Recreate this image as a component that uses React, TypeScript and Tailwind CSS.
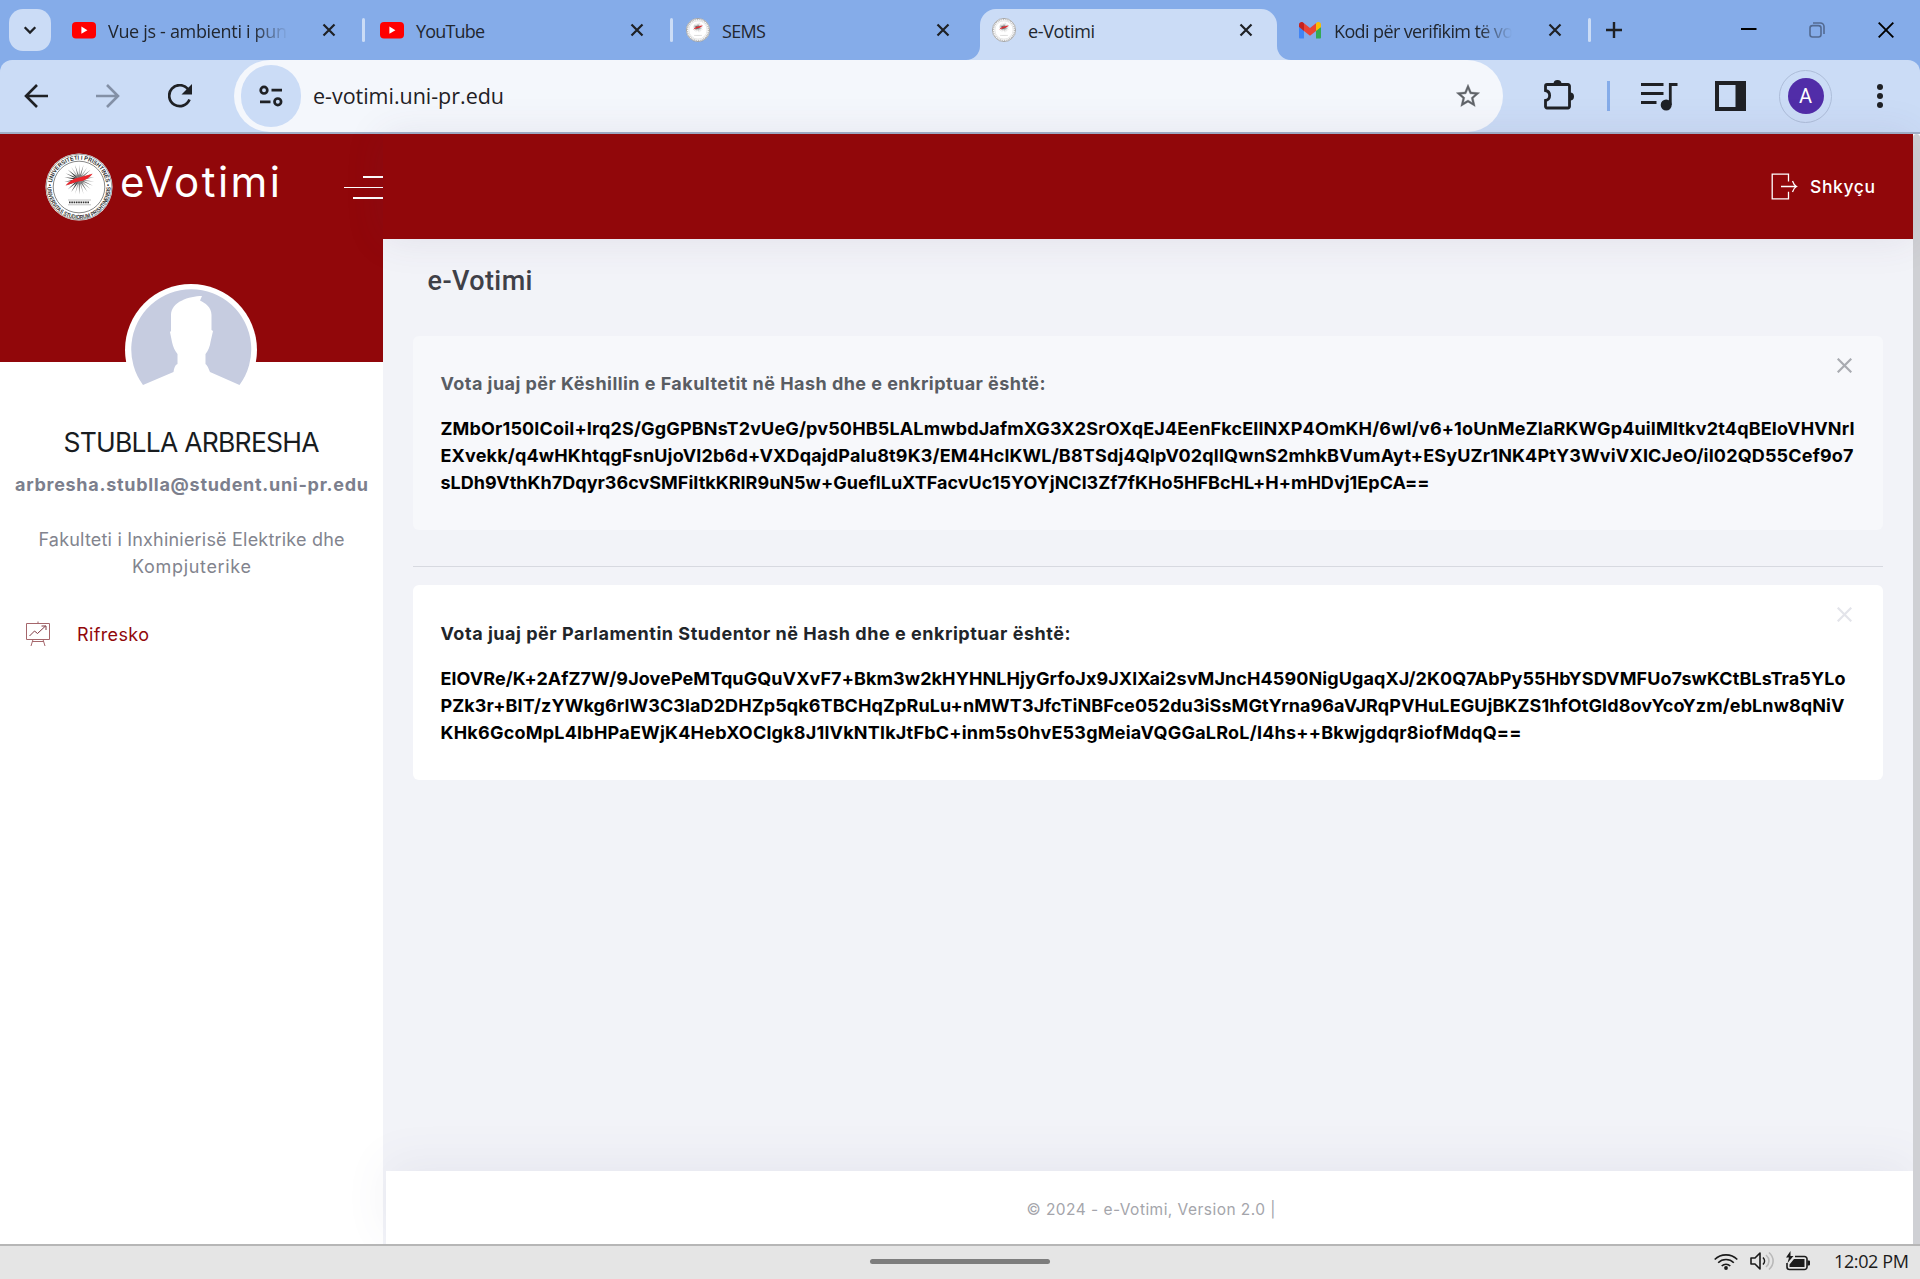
import { useLayoutEffect, useRef, useState } from "react";
import type { ReactNode } from "react";

/** One line of text whose tracking is adjusted so that it spans `width` pixels. */
function Fit({ text, width, className = "" }: { text: string; width: number; className?: string }) {
  const ref = useRef<HTMLSpanElement>(null);
  const [spacing, setSpacing] = useState(0);
  useLayoutEffect(() => {
    const el = ref.current;
    if (!el) return;
    const natural = el.getBoundingClientRect().width - spacing * text.length;
    setSpacing((width - natural) / (text.length - 1));
  }, [text, width]);
  return (
    <span
      ref={ref}
      className={`inline-block whitespace-nowrap ${className}`}
      style={{ letterSpacing: `${spacing}px`, marginRight: `${-spacing}px` }}
    >
      {text}
    </span>
  );
}

function YouTubeIcon() {
  return (
    <svg className="h-6 w-6 shrink-0" viewBox="0 0 24 24">
      <rect x="0" y="4" width="24" height="16.5" rx="4" fill="#ff0000" />
      <path d="M9.4 8.6v7.2l6-3.6z" fill="#fff" />
    </svg>
  );
}

const RAYS = Array.from({ length: 22 }, (_, i) => i * (360 / 22));

function Seal({ size, detail }: { size: number; detail: boolean }) {
  return (
    <svg width={size} height={size} viewBox="0 0 68 68" className="shrink-0">
      <circle cx="34" cy="34" r="33.5" fill="#fff" />
      <circle cx="34" cy="34" r="32.8" fill="none" stroke="#888" strokeWidth={detail ? 0.8 : 2} />
      <circle cx="34" cy="34" r="25.8" fill="none" stroke={detail ? "#555" : "#bbb"} strokeWidth={detail ? 0.7 : 1} />
      {detail ? (
        <>
          <defs>
            <path id="seal-top" d="M7.2 38.5A27.2 27.2 0 1 1 60.8 38.5" />
            <path id="seal-bottom" d="M2.600 31A31.600 31.600 0 1 0 65.400 31" />
          </defs>
          <text fontSize="6" fontWeight="700" fill="#333" fontFamily="Liberation Sans, sans-serif" textAnchor="middle">
            <textPath href="#seal-top" startOffset="50%" textLength="84" lengthAdjust="spacingAndGlyphs">
              • UNIVERSITETI I PRISHTINËS •
            </textPath>
          </text>
          <text fontSize="6" fontWeight="700" fill="#333" fontFamily="Liberation Sans, sans-serif" textAnchor="middle">
            <textPath href="#seal-bottom" startOffset="50%" textLength="100" lengthAdjust="spacingAndGlyphs">
              UNIVERSITAS STUDIORUM PRISHTINENSIS
            </textPath>
          </text>
        </>
      ) : (
        <circle cx="34" cy="34" r="29.5" fill="none" stroke="#bbb" strokeWidth="3.500" strokeDasharray="3 2.400" />
      )}
      {RAYS.map((a, i) => (
        <path
          key={a}
          d="M33.4 26.500L34.300 11.500L35.200 26.500Z"
          fill={i > 12 && i < 20 ? "#333" : i % 2 ? "#777" : "#aaa"}
          transform={`rotate(${a} 34.300 26.500)`}
        />
      ))}
      <circle cx="34.3" cy="26.5" r="5" fill="#777" opacity="0.7" />
      <path d="M20.500 32.400C25 27.500 29 25.200 35 24.200L47.600 20.800C43 26.500 39 28 33 28.600Z" fill="#e8252c" />
      {detail && <path d="M23 47h23M23 51.800h23" stroke="#999" strokeWidth="0.600" />}
      <path d="M24 49.400h20" stroke={detail ? "#333" : "#aaa"} strokeWidth="1.800" strokeDasharray="1.600 0.700" />
    </svg>
  );
}

function GmailIcon() {
  return (
    <svg className="h-6 w-6 shrink-0" viewBox="0 0 24 24">
      <path d="M1 9v10.2c0 .7.5 1.3 1.200 1.3H6V12z" fill="#4285f4" />
      <path d="M18 12v8.500h3.800c.7 0 1.200-.6 1.200-1.300V9z" fill="#34a853" />
      <path d="M6 5.200V13l6 4.800 6-4.800V5.200l-6 4.900z" fill="#ea4335" />
      <path d="M18 5.200V13l5-4V6.600c0-2.300-2.300-3.200-3.800-2.300z" fill="#fbbc04" />
      <path d="M1 6.600V9l5 4V5.200l-1.200-.9C3.300 3.400 1 4.300 1 6.600z" fill="#c5221f" />
    </svg>
  );
}

function Close() {
  return (
    <svg className="h-3.5 w-3.5 shrink-0" viewBox="0 0 14 14" stroke="#1f2125" strokeWidth="2.2">
      <path d="M1.500 1.500l11 11M12.500 1.500l-11 11" />
    </svg>
  );
}

function Tab({ icon, children, divider = true }: { icon: ReactNode; children: ReactNode; divider?: boolean }) {
  return (
    <div className="flex h-full w-[304px] shrink-0 items-center pl-[10px]">
      {icon}
      <div className="ml-3 mt-[2px] flex h-8 w-[180px] items-center text-[#22272f]">{children}</div>
      <div className="ml-auto mr-[26px] flex">
        <Close />
      </div>
      <div className={`h-6 w-[3px] rounded-sm ${divider ? "bg-[#cbdcf6]" : ""}`} />
      <div className="w-px" />
    </div>
  );
}

function TabStrip() {
  return (
    <div className="flex h-[60px] items-center bg-[#85ace9] font-['Open_Sans','Noto_Sans',sans-serif] text-[18px]">
      <div className="ml-[9px] mr-[10px] flex h-[42px] w-[42px] shrink-0 items-center justify-center rounded-[14px] bg-[#cbdcf6]">
        <svg className="h-4 w-4" viewBox="0 0 16 16" fill="none" stroke="#1f2125" strokeWidth="2.300">
          <path d="M2.700 5.300L8 10.600l5.300-5.300" />
        </svg>
      </div>
      <div className="ml-px">
        <Tab icon={<YouTubeIcon />}>
          <div className="[mask-image:linear-gradient(to_right,black_145px,transparent_180px)]">
            <Fit text="Vue js - ambienti i pun" width={179} />
          </div>
        </Tab>
      </div>
      <div className="ml-1">
        <Tab icon={<YouTubeIcon />}>
          <Fit text="YouTube" width={69} />
        </Tab>
      </div>
      <div className="ml-[2px]">
        <Tab icon={<Seal size={24} detail={false} />} divider={false}>
          <Fit text="SEMS" width={44} />
        </Tab>
      </div>
      <div className="relative mt-[9px] flex h-[51px] w-[297px] shrink-0 items-center rounded-t-2xl bg-[#cbdcf6] pl-3">
        <svg className="absolute -left-3.5 bottom-0 h-3.5 w-3.5" viewBox="0 0 14 14">
          <path d="M14 0v14H0A14 14 0 0 0 14 0" fill="#cbdcf6" />
        </svg>
        <svg className="absolute -right-3.5 bottom-0 h-3.5 w-3.5" viewBox="0 0 14 14">
          <path d="M0 0v14H14A14 14 0 0 1 0 0" fill="#cbdcf6" />
        </svg>
        <div className="mb-[9px] flex w-full items-center">
          <Seal size={24} detail={false} />
          <div className="ml-3 mt-[2px] h-8 text-[#22272f]">
            <Fit text="e-Votimi" width={67} className="leading-8" />
          </div>
          <div className="ml-auto mr-[24px] flex">
            <Close />
          </div>
        </div>
      </div>
      <div className="ml-[11px]">
        <Tab icon={<GmailIcon />}>
          <div className="[mask-image:linear-gradient(to_right,black_145px,transparent_178px)]">
            <Fit text="Kodi për verifikim të vo" width={179} />
          </div>
        </Tab>
      </div>
      <svg className="ml-[14px] h-4 w-4 shrink-0" viewBox="0 0 16 16" stroke="#1f2125" strokeWidth="2.400">
        <path d="M8 0v16M0 8h16" />
      </svg>
      <svg className="ml-auto h-4 w-4 shrink-0" viewBox="0 0 16 16" stroke="#000" strokeWidth="2">
        <path d="M0 7h15.500" />
      </svg>
      <svg className="ml-[52px] h-4 w-4 shrink-0" viewBox="0 0 16 16" fill="none" stroke="#536a91" strokeWidth="1.600">
        <rect x="1" y="3.600" width="11" height="11.400" rx="2.500" />
        <path d="M4 1h7.500a3.500 3.500 0 0 1 3.500 3.500v7.500" />
      </svg>
      <svg className="ml-[53px] mr-[26px] h-4 w-4 shrink-0" viewBox="0 0 16 16" stroke="#000" strokeWidth="1.900">
        <path d="M.700.700l14.600 14.600M15.300.700L.700 15.300" />
      </svg>
    </div>
  );
}

function Toolbar() {
  return (
    <div className="h-[74px] bg-[#85ace9]">
      <div className="flex h-[74px] items-center rounded-t-[12px] border-b-2 border-[#a1afc7] bg-[#cbdcf6]">
        <svg className="ml-6 h-6 w-6 shrink-0" viewBox="0 0 24 24" fill="none" stroke="#1f2125" strokeWidth="2.600">
          <path d="M24 12H2M13 1L2 12l11 11" />
        </svg>
        <svg className="ml-12 h-6 w-6 shrink-0" viewBox="0 0 24 24" fill="none" stroke="#8390a6" strokeWidth="2.600">
          <path d="M0 12h22M11 1l11 11-11 11" />
        </svg>
        <svg className="ml-12 h-6 w-6 shrink-0" viewBox="0 0 24 24" fill="none" stroke="#1f2125" strokeWidth="2.700">
          <path d="M21.500 15.500A10.500 10.500 0 1 1 20 5.200" />
          <path d="M24 0v10.500H13.500z" fill="#1f2125" stroke="none" />
        </svg>
        <div className="ml-[42px] flex h-[72px] w-[1269px] shrink-0 items-center rounded-full bg-[#f4f7fc]">
          <div className="ml-[7px] flex h-[62px] w-[60px] shrink-0 items-center justify-center rounded-full bg-[#cbdcf6]">
            <svg className="h-[22px] w-6" viewBox="0 0 24 22" fill="none" stroke="#1f2125" strokeWidth="2.700">
              <circle cx="5" cy="5.200" r="3.300" />
              <path d="M12.500 5.200H23M1 16.800h10.500" />
              <circle cx="18.800" cy="16.800" r="3.300" />
            </svg>
          </div>
          <div className="ml-3 font-['Open_Sans','Noto_Sans',sans-serif] text-[21.500px] text-[#1f2125]">
            <Fit text="e-votimi.uni-pr.edu" width={191} />
          </div>
          <svg className="ml-auto mr-[21px] h-[28px] w-[28px]" viewBox="0 0 24 24" fill="#5f6368" stroke="#5f6368" strokeWidth="0.300">
            <path d="M22 9.240l-7.190-.620L12 2 9.190 8.630 2 9.240l5.460 4.730L5.820 21 12 17.270 18.180 21l-1.630-7.030L22 9.240zM12 15.400l-3.760 2.270 1-4.280-3.320-2.880 4.380-.380L12 6.100l1.710 4.040 4.380.380-3.320 2.880 1 4.280L12 15.400z" />
          </svg>
        </div>
        <svg className="mb-[2px] ml-[40px] h-[30px] w-[32px] shrink-0" viewBox="0 0 32 30">
          <path
            d="M4.500 4.500h20.500a1.500 1.500 0 0 1 1.500 1.500v20.500a1.500 1.500 0 0 1-1.500 1.500H4a1.500 1.500 0 0 1-1.500-1.500V20.500c5.500-1 5.500-9 0-10V6a1.500 1.500 0 0 1 1.500-1.500z"
            fill="none"
            stroke="#1f2125"
            strokeWidth="2.800"
          />
          <path d="M10.500 4a4 4 0 0 1 8 0zM27 12.500a4 4 0 0 1 0 8z" fill="#1f2125" />
        </svg>
        <div className="ml-[32px] h-[30px] w-[2.500px] shrink-0 bg-[#85ace9]" />
        <svg className="ml-[31px] h-[30px] w-[37px] shrink-0" viewBox="0 0 37 30" fill="none" stroke="#1f2125" strokeWidth="2.800">
          <path d="M0 3.500h22.500M0 12.500h22.500M0 21.500h15.500M29.300 24V3.500H36.500" />
          <circle cx="25.200" cy="24" r="5.500" fill="#1f2125" stroke="none" />
        </svg>
        <svg className="ml-[37.500px] h-[30px] w-[31px] shrink-0" viewBox="0 0 31 30">
          <path d="M0 0h31v30H0zM4 4v22h16.500V4z" fill="#1f2125" fillRule="evenodd" />
        </svg>
        <div className="ml-[33px] flex h-[53px] w-[53px] shrink-0 items-center justify-center rounded-full border border-[#adbdd9]">
          <div className="flex h-9 w-9 items-center justify-center rounded-full bg-[#512da8] font-['Roboto',sans-serif] text-[20px] text-white">
            A
          </div>
        </div>
        <svg className="ml-[45px] h-6 w-[6px] shrink-0" viewBox="0 0 6 24" fill="#1f2125">
          <circle cx="3" cy="3" r="3" />
          <circle cx="3" cy="12" r="3" />
          <circle cx="3" cy="21" r="3" />
        </svg>
      </div>
    </div>
  );
}

function Sidebar() {
  return (
    <aside className="h-full w-[383px] shrink-0 bg-white font-['Inter',sans-serif]">
      <div className="h-[228px] bg-[#91070a]">
        <div className="flex h-[105px] items-center">
          <div className="ml-[45px] h-[68px]">
            <Seal size={68} detail />
          </div>
          <div className="-mt-[9px] ml-[7px] text-[42px] leading-[60px] text-white">
            <Fit text="eVotimi" width={160} />
          </div>
          <div className="ml-auto mt-[2px] flex flex-col items-end">
            <div className="h-[2px] w-5 bg-white" />
            <div className="mt-[9px] h-px w-[39px] bg-white" />
            <div className="mt-[9px] h-[2px] w-[30px] bg-white" />
          </div>
        </div>
        <svg className="ml-[125px] mt-[45px] h-[132px] w-[132px]" viewBox="0 0 132 132">
          <circle cx="66" cy="66" r="66" fill="#fff" />
          <path d="M18 101A60 60 0 1 1 114.500 101L85 88C83 83 82 81 80.500 80V70C83 67 85 62 85.500 58L88 47L86.500 46V31C86.500 23 80 19 75 16.500L77 12C64 12 46 18 46 31V47L45 48L47 58C48 63 50 67 52.500 70V80C50 81 49 84 48.500 88Z" fill="#c6cce0" />
        </svg>
      </div>
      <div className="flex flex-col items-center pt-[60px]">
        <div className="text-[26.500px] leading-10 text-[#181c1f]">
          <Fit text="STUBLLA ARBRESHA" width={256} />
        </div>
        <div className="mt-[7px] text-[18px] font-bold leading-[32px] text-[#7c7f8d]">
          <Fit text="arbresha.stublla@student.uni-pr.edu" width={353} />
        </div>
        <div className="mt-[25px] text-[18px] leading-[27px] text-[#82848e]">
          <Fit text="Fakulteti i Inxhinierisë Elektrike dhe" width={306} />
        </div>
        <div className="text-[18px] leading-[27px] text-[#82848e]">
          <Fit text="Kompjuterike" width={119} />
        </div>
      </div>
      <div className="mt-[40px] flex h-[27px] items-center pl-[25px] text-[18px] text-[#91070a]">
        <svg className="h-[26px] w-[26px]" viewBox="0 0 26 26" fill="none" stroke="#a5666b" strokeWidth="1">
          <path d="M1.500 2.500h23v16h-23zM13 .5v2M8 18.500l-2 6.500M18 18.500l2 6.500M7 20.500h12" />
          <path d="M4.500 15l5-5 3 2.500 8-7.500M16.500 5h4.500v4" stroke="#7e3a42" />
        </svg>
        <div className="ml-[26px] mt-px">
          <Fit text="Rifresko" width={72} />
        </div>
      </div>
    </aside>
  );
}

function VoteCard({
  title,
  titleWidth,
  lines,
  className,
  titleClass,
  crossClass,
}: {
  title: string;
  titleWidth: number;
  lines: [string, number][];
  className: string;
  titleClass: string;
  crossClass: string;
}) {
  return (
    <section className={`relative rounded-md pl-[27.500px] text-[18px] leading-[27px] ${className}`}>
      <svg className={`absolute right-[31px] top-[22px] h-[15px] w-[15px] ${crossClass}`} viewBox="0 0 15 15" stroke="currentColor" strokeWidth="2.200">
        <path d="M.700.700l13.600 13.600M14.300.700L.700 14.300" />
      </svg>
      <h2 className={`mb-[18px] h-[27px] font-bold ${titleClass}`}>
        <Fit text={title} width={titleWidth} />
      </h2>
      {lines.map(([text, width]) => (
        <div key={text} className="h-[27px] font-bold text-black">
          <Fit text={text} width={width} />
        </div>
      ))}
    </section>
  );
}

function Main() {
  return (
    <div className="flex h-full min-w-0 flex-1 flex-col bg-[#f2f3f8] font-['Inter',sans-serif]">
      <header className="z-10 flex h-[105px] shrink-0 items-center justify-end bg-[#91070a] pr-[38px] text-white shadow-[0_0_40px_rgba(82,63,105,0.1)]">
        <svg className="h-[27px] w-[27px]" viewBox="0 0 27 27" fill="none" stroke="#fff" strokeWidth="1.300">
          <path d="M17.500 8.500V1.200H1.200v24.600h16.300v-7M10 13.500h15.500M21.500 8c1 3 2 4.500 4 5.500-2 1-3 2.500-4 5.500" />
        </svg>
        <div className="ml-3 mt-px text-[17.500px] font-medium">
          <Fit text="Shkyçu" width={65} />
        </div>
      </header>
      <main className="flex-1 pl-[30px] pr-[30px]">
        <h1 className="mt-[22px] h-10 pl-[14.500px] font-['Roboto',sans-serif] text-[27px] font-medium leading-10 text-[#3f4047]">
          <Fit text="e-Votimi" width={105} />
        </h1>
        <VoteCard
          className="mt-[35px] h-[194px] bg-[#f7f8fb] pt-[34px]"
          titleClass="text-[#595d63]"
          crossClass="text-[#a9abb1]"
          title="Vota juaj për Këshillin e Fakultetit në Hash dhe e enkriptuar është:"
          titleWidth={605}
          lines={[
            ["ZMbOr150ICoiI+Irq2S/GgGPBNsT2vUeG/pv50HB5LALmwbdJafmXG3X2SrOXqEJ4EenFkcEIlNXP4OmKH/6wI/v6+1oUnMeZIaRKWGp4uiIMltkv2t4qBEIoVHVNrI", 1414],
            ["EXvekk/q4wHKhtqgFsnUjoVI2b6d+VXDqajdPaIu8t9K3/EM4HclKWL/B8TSdj4QlpV02qlIQwnS2mhkBVumAyt+ESyUZr1NK4PtY3WviVXICJeO/iI02QD55Cef9o7", 1413],
            ["sLDh9VthKh7Dqyr36cvSMFiItkKRIR9uN5w+GueflLuXTFacvUc15YOYjNCl3Zf7fKHo5HFBcHL+H+mHDvj1EpCA==", 989],
          ]}
        />
        <hr className="mb-[18px] mt-[36px] border-0 border-t border-[#d7d9e0]" />
        <VoteCard
          className="h-[195px] bg-white pt-[35px]"
          titleClass="text-[#212529]"
          crossClass="text-[#e3e4ea]"
          title="Vota juaj për Parlamentin Studentor në Hash dhe e enkriptuar është:"
          titleWidth={630}
          lines={[
            ["ElOVRe/K+2AfZ7W/9JovePeMTquGQuVXvF7+Bkm3w2kHYHNLHjyGrfoJx9JXlXai2svMJncH4590NigUgaqXJ/2K0Q7AbPy55HbYSDVMFUo7swKCtBLsTra5YLo", 1405],
            ["PZk3r+BIT/zYWkg6rlW3C3laD2DHZp5qk6TBCHqZpRuLu+nMWT3JfcTiNBFce052du3iSsMGtYrna96aVJRqPVHuLEGUjBKZS1hfOtGId8ovYcoYzm/ebLnw8qNiV", 1404],
            ["KHk6GcoMpL4IbHPaEWjK4HebXOClgk8J1lVkNTlkJtFbC+inm5s0hvE53gMeiaVQGGaLRoL/I4hs++Bkwjgdqr8iofMdqQ==", 1081],
          ]}
        />
      </main>
      <footer className="ml-[3px] flex h-[73px] shrink-0 items-center justify-center bg-white pl-[3px] pt-[5px] text-[15.500px] text-[#a4a5ab] shadow-[0_-10px_45px_rgba(82,90,130,0.07)]">
        <Fit text="© 2024 - e-Votimi, Version 2.0 |" width={249} />
      </footer>
    </div>
  );
}

function Taskbar() {
  return (
    <div className="grid h-[35px] grid-cols-[1fr_180px_1fr] items-center border-t-2 border-[#b6b6b6] bg-[#e5e5e5] pb-[3px]">
      <div />
      <div className="h-[5px] w-[180px] rounded-full bg-[#7d7d7d]" />
      <div className="flex items-center justify-end pr-[11px]">
        <svg className="h-[18px] w-6" viewBox="0 0 24 18" fill="none" stroke="#1b1b1b" strokeWidth="1.600">
          <path d="M.7 7.500a16 16 0 0 1 22.600 0M4.200 10.800a11 11 0 0 1 15.600 0M7.700 14a6.200 6.200 0 0 1 8.600 0" />
          <circle cx="12" cy="16" r="1.900" fill="#1b1b1b" stroke="none" />
        </svg>
        <svg className="ml-3 h-5 w-[25px]" viewBox="0 0 25 20" fill="none" stroke="#1b1b1b" strokeWidth="1.600">
          <path d="M1 7h4l5-5v16l-5-5H1z" strokeLinejoin="round" />
          <path d="M13 6.500c2 2 2 5 0 7" />
          <path d="M16 4c4 3.500 4 8.500 0 12M19 1.500c5.500 5 5.500 12 0 17" stroke="#b9b9b9" />
        </svg>
        <svg className="ml-[11px] h-5 w-6" viewBox="0 0 24 20">
          <path d="M9 5.500h9.500a2.500 2.500 0 0 1 2.500 2.500v8a2.500 2.500 0 0 1-2.500 2.500H3.500A2.500 2.500 0 0 1 1 16v-4" fill="none" stroke="#1b1b1b" strokeWidth="1.600" />
          <path d="M8 8h10.500v8H3.500v-2.500zM21.500 9.500h1.500a1 1 0 0 1 1 1v3a1 1 0 0 1-1 1h-1.500zM4.500 0L0 6.500h3L1.500 12 7.500 5H4.500z" fill="#1b1b1b" />
        </svg>
        <div className="ml-[24px] font-['Open_Sans','Noto_Sans',sans-serif] text-[18px] leading-6 text-[#1b1b1b]">
          <Fit text="12:02 PM" width={75} />
        </div>
      </div>
    </div>
  );
}

export default function App() {
  return (
    <div className="flex h-[1279px] w-[1920px] flex-col overflow-hidden">
      <TabStrip />
      <Toolbar />
      <div className="flex h-[1110px]">
        <Sidebar />
        <Main />
        <div className="w-[7px] shrink-0 rounded-t bg-[#cfd0d4]" />
      </div>
      <Taskbar />
    </div>
  );
}
